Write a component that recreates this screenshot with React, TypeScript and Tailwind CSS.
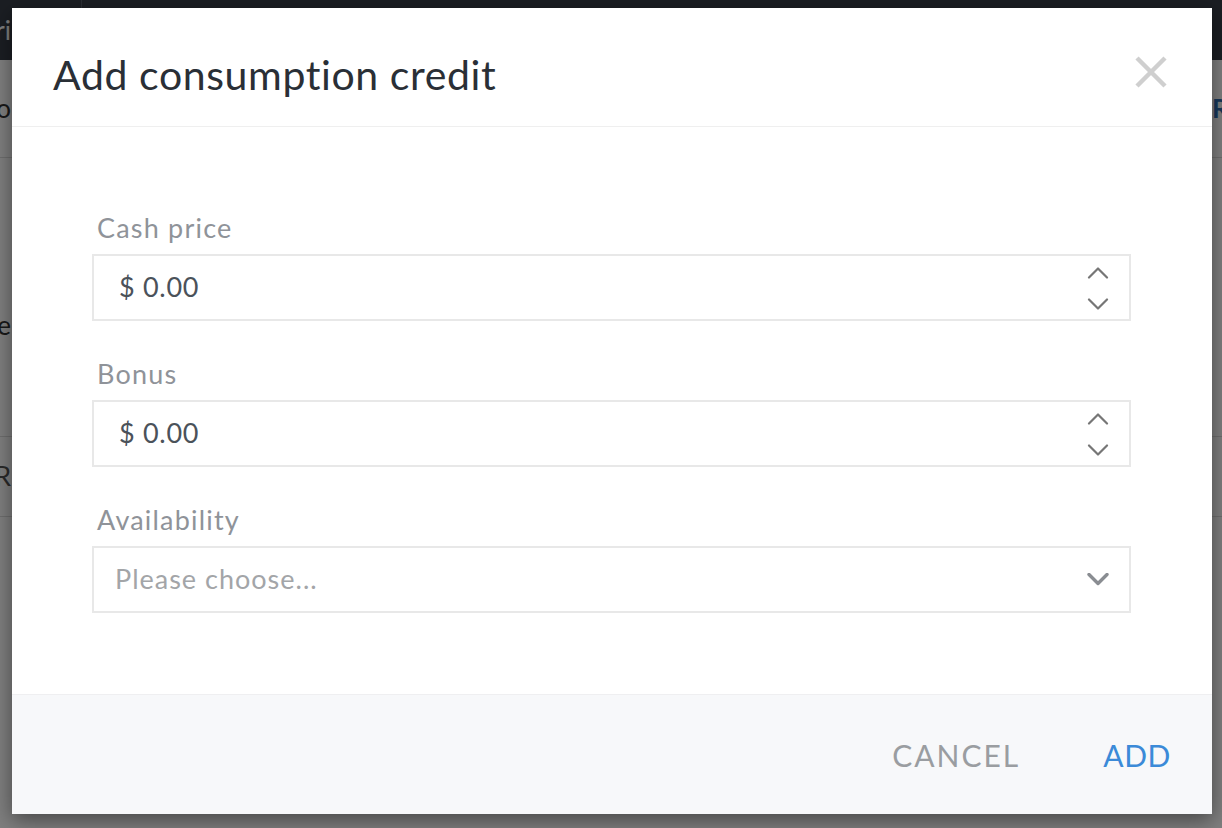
import React from 'react';

const font = { fontFamily: 'Lato, "Noto Sans", sans-serif' };

const Chevron: React.FC<{ dir: 'up' | 'down'; bold?: boolean }> = ({ dir, bold }) => (
  <svg width="22" height="13" viewBox="0 0 22 13" fill="none">
    <path
      d={dir === 'up' ? 'M2 11.5L11 2.5L20 11.5' : 'M2 1.5L11 10.5L20 1.5'}
      stroke={bold ? '#8a8d92' : '#767676'}
      strokeWidth={bold ? 3.4 : 2.2}
      strokeLinecap="round"
      strokeLinejoin="round"
    />
  </svg>
);

const MoneyField: React.FC<{ label: string }> = ({ label }) => (
  <div className="flex flex-col">
    <label className="pl-[5px] text-[27px] leading-[32px] tracking-[1.2px] text-[#8f9399] mb-[10px]">{label}</label>
    <div className="h-[67px] border-2 border-[#e8e8e8] flex items-center justify-between pl-[25px] pr-[20px]">
      <span className="text-[27px] tracking-[0.7px] text-[#4b525a]">$ 0.00</span>
      <div className="flex flex-col gap-[19px] pt-[2px]">
        <Chevron dir="up" />
        <Chevron dir="down" />
      </div>
    </div>
  </div>
);

// text that sticks out at the left edge of the page
const Edge: React.FC<{ children: React.ReactNode; className?: string }> = ({ children, className }) => (
  <div className="w-[11px] shrink-0 flex justify-end whitespace-nowrap">
    <span className={className}>{children}</span>
  </div>
);

export default function App() {
  return (
    <div className="relative w-[1222px] h-[828px] overflow-hidden bg-white" style={font}>
      {/* page behind the dialog */}
      <div className="flex flex-col h-full">
        <div className="h-[60px] bg-[#363c46] flex items-center">
          <div className="w-[82px] h-full border-r border-[#555b66] flex items-center">
            <Edge className="text-white text-[26px]">Pri</Edge>
          </div>
        </div>
        <div className="h-[98px] flex items-center justify-between border-b border-[#dddddd]">
          <Edge className="text-[26px] text-[#333]">Info</Edge>
          <div className="w-[10px] shrink-0 whitespace-nowrap">
            <span className="text-[26px] font-bold text-[#2f6fb5]">REFUND</span>
          </div>
        </div>
        <div className="h-[279px] flex items-center pt-[56px] border-b border-[#dddddd]">
          <Edge className="text-[26px] text-[#333]">Name</Edge>
        </div>
        <div className="h-[80px] flex items-center border-b border-[#dddddd]">
          <Edge className="text-[26px] text-[#555]">PR</Edge>
        </div>
      </div>

      {/* overlay */}
      <div className="absolute inset-0 bg-[rgba(0,0,0,0.5)]" />

      {/* dialog */}
      <div className="absolute left-[12px] top-[8px] w-[1200px] h-[806px] bg-white flex flex-col shadow-[0_6px_20px_rgba(0,0,0,0.45)]">
        <div className="h-[119px] shrink-0 border-b border-[#efefef] flex items-center justify-between pl-[41px] pr-[44px] pt-[17px]">
          <h1 className="text-[41px] text-[#2a2f36] tracking-[0.6px] pb-[2px]">Add consumption credit</h1>
          <svg width="34" height="34" viewBox="0 0 34 34" className="mb-[8px]">
            <path d="M3 3L31 31M31 3L3 31" stroke="#cfcfcf" strokeWidth="4.5" />
          </svg>
        </div>

        <div className="flex-1 pt-[85px] pl-[80px] pr-[81px] flex flex-col gap-[37px]">
          <MoneyField label="Cash price" />
          <MoneyField label="Bonus" />
          <div className="flex flex-col">
            <label className="pl-[5px] text-[27px] leading-[32px] tracking-[1.2px] text-[#8f9399] mb-[10px]">Availability</label>
            <div className="h-[67px] border-2 border-[#e8e8e8] flex items-center justify-between pl-[21px] pr-[20px]">
              <span className="text-[27px] tracking-[1px] text-[#a3a5a8]">Please choose...</span>
              <Chevron dir="down" bold />
            </div>
          </div>
        </div>

        <div className="h-[120px] shrink-0 bg-[#f7f8fa] border-t border-[#efeff1] flex items-center justify-end pr-[41px] gap-[83px]">
          <button className="text-[30px] text-[#9a9da1] tracking-[2px] pt-[2px]">CANCEL</button>
          <button className="text-[30px] text-[#3b8ad8] tracking-[0.6px] pt-[2px]">ADD</button>
        </div>
      </div>
    </div>
  );
}
